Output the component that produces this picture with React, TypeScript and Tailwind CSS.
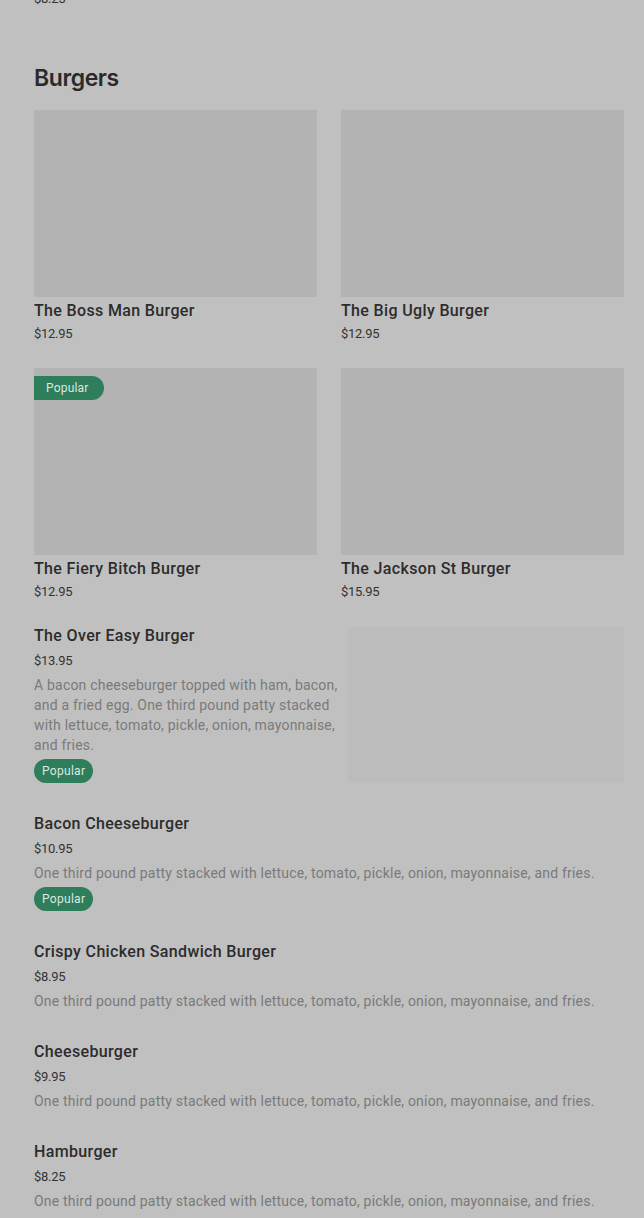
const gridItems = [
  { name: "The Boss Man Burger", price: "$12.95", popular: false },
  { name: "The Big Ugly Burger", price: "$12.95", popular: false },
  { name: "The Fiery Bitch Burger", price: "$12.95", popular: true },
  { name: "The Jackson St Burger", price: "$15.95", popular: false },
];

const stdDesc = "One third pound patty stacked with lettuce, tomato, pickle, onion, mayonnaise, and fries.";

const listItems = [
  { name: "Bacon Cheeseburger", price: "$10.95", desc: stdDesc, popular: true },
  { name: "Crispy Chicken Sandwich Burger", price: "$8.95", desc: stdDesc, popular: false },
  { name: "Cheeseburger", price: "$9.95", desc: stdDesc, popular: false },
  { name: "Hamburger", price: "$8.25", desc: stdDesc, popular: false },
];

function Badge() {
  return (
    <span className="mt-1 inline-flex h-6 items-center rounded-full bg-[#2e7d5b] px-2 text-[12px] tracking-[0.3px] text-[#dbe8e1]">
      Popular
    </span>
  );
}

export default function App() {
  return (
    <div className="min-h-screen overflow-hidden bg-[#c0c0c0] pl-[34px] pr-5 font-['Roboto',sans-serif] text-[#2c2c2c]">
      {/* tail of previous section */}
      <div className="-mt-[10px] text-[13px] leading-[18px] tracking-[-0.3px] text-[#333]">$8.25</div>

      <h2 className="mt-[56px] font-['Inter',sans-serif] text-[23px] font-semibold leading-7 tracking-[-0.4px] text-[#2a2a2a]">
        Burgers
      </h2>

      <div className="mt-[18px] grid grid-cols-2 gap-x-6 gap-y-[25px]">
        {gridItems.map((item) => (
          <div key={item.name} className="flex flex-col">
            <div className="relative h-[187px] bg-[#b3b3b3]">
              {item.popular && (
                <span className="absolute left-0 top-2 inline-flex h-6 items-center rounded-r-full bg-[#2e7d5b] pl-3 pr-[15px] text-[12px] tracking-[0.2px] text-[#dbe8e1]">
                  Popular
                </span>
              )}
            </div>
            <div className="mt-[3px] text-base font-medium leading-[22px] tracking-[0.35px]">{item.name}</div>
            <div className="mt-[3px] text-[13px] leading-[18px] tracking-[-0.3px] text-[#333]">{item.price}</div>
          </div>
        ))}
      </div>

      <div className="mt-[24px] flex flex-col gap-[30px] pb-10">
        <div className="flex gap-1">
          <div className="flex flex-1 flex-col items-start">
            <div className="text-base font-medium leading-[22px] tracking-[0.35px]">The Over Easy Burger</div>
            <div className="mt-[5px] text-[13px] leading-[18px] tracking-[-0.3px] text-[#333]">$13.95</div>
            <p className="mt-[5px] text-sm leading-5 tracking-[0.2px] text-[#7a7a7a]">
              A bacon cheeseburger topped with ham, bacon, and a fried egg. One third pound patty stacked with lettuce, tomato, pickle, onion, mayonnaise, and fries.
            </p>
            <Badge />
          </div>
          <div className="mt-[2px] h-[155px] w-[276px] shrink-0 bg-[#bcbcbc]" />
        </div>

        {listItems.map((item) => (
          <div key={item.name} className="flex flex-col items-start">
            <div className="text-base font-medium leading-[22px] tracking-[0.35px]">{item.name}</div>
            <div className="mt-[5px] text-[13px] leading-[18px] tracking-[-0.3px] text-[#333]">{item.price}</div>
            <p className="mt-[5px] text-sm leading-5 tracking-[0.2px] text-[#7a7a7a]">{item.desc}</p>
            {item.popular && <Badge />}
          </div>
        ))}
      </div>
    </div>
  );
}
